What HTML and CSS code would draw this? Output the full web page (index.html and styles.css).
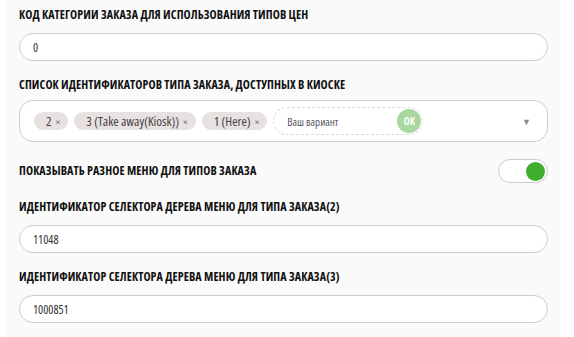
FILE: index.html
```html
<!DOCTYPE html>
<html lang="ru">
<head>
    <meta charset="UTF-8">
    <title>Настройки киоска</title>
    <link rel="stylesheet" href="styles.css">
</head>
<body>
    <div class="panel">
        <!-- Код категории -->
        <div class="field">
            <label class="label">КОД КАТЕГОРИИ ЗАКАЗА ДЛЯ ИСПОЛЬЗОВАНИЯ ТИПОВ ЦЕН</label>
            <input class="input" type="text" value="0">
        </div>

        <!-- Список типов заказа -->
        <div class="field">
            <label class="label label-multi">СПИСОК ИДЕНТИФИКАТОРОВ ТИПА ЗАКАЗА, ДОСТУПНЫХ В КИОСКЕ</label>
            <div class="multi">
                <span class="chip">2 <span class="chip-x">×</span></span>
                <span class="chip">3 (Take away(Kiosk)) <span class="chip-x">×</span></span>
                <span class="chip">1 (Here) <span class="chip-x">×</span></span>
                <div class="custom">
                    <span class="custom-text">Ваш вариант</span>
                    <span class="ok">OK</span>
                </div>
                <span class="arrow">▼</span>
            </div>
        </div>

        <!-- Переключатель -->
        <div class="toggle-row">
            <span class="label">ПОКАЗЫВАТЬ РАЗНОЕ МЕНЮ ДЛЯ ТИПОВ ЗАКАЗА</span>
            <span class="toggle"><span class="knob"></span></span>
        </div>

        <div class="field">
            <label class="label">ИДЕНТИФИКАТОР СЕЛЕКТОРА ДЕРЕВА МЕНЮ ДЛЯ ТИПА ЗАКАЗА(2)</label>
            <input class="input" type="text" value="11048">
        </div>

        <div class="field">
            <label class="label">ИДЕНТИФИКАТОР СЕЛЕКТОРА ДЕРЕВА МЕНЮ ДЛЯ ТИПА ЗАКАЗА(3)</label>
            <input class="input" type="text" value="1000851">
        </div>
    </div>
</body>
</html>
```

FILE: styles.css
```css
* {
    margin: 0;
    padding: 0;
    box-sizing: border-box;
}

body {
    background-color: #ffffff;
    font-family: 'Open Sans', sans-serif;
    font-stretch: 75%;
    padding-left: 7px;
    width: 560px;
    height: 100vh;
    overflow: hidden;
}

.panel {
    background-color: #fafafa;
    padding: 8px 12px 0 12px;
    height: 100vh;
}

.field {
    display: flex;
    flex-direction: column;
    margin-bottom: 17px;
}

.label {
    display: block;
    font-size: 12px;
    font-weight: 700;
    letter-spacing: 0.1px;
    color: #111111;
    line-height: 14px;
    height: 14px;
}

.field .label {
    margin-bottom: 11px;
}

.field .label-multi {
    margin-bottom: 8px;
}

.input {
    width: 100%;
    height: 28px;
    border: 1px solid #cccccc;
    border-radius: 14px;
    background-color: #ffffff;
    padding: 0 13px;
    font-family: 'Open Sans', sans-serif;
    font-stretch: 75%;
    font-size: 12px;
    color: #333333;
    outline: none;
}

.multi {
    display: flex;
    align-items: center;
    gap: 6px;
    height: 42px;
    border: 1px solid #cccccc;
    border-radius: 14px;
    background-color: #ffffff;
    padding: 0 14px;
}

.chip {
    display: flex;
    align-items: center;
    gap: 4px;
    height: 18px;
    padding: 0 8px 0 12px;
    background-color: #e8e1e1;
    border-radius: 9px;
    font-size: 13px;
    color: #444444;
}

.chip-x {
    font-size: 11px;
    color: #666666;
}

.custom {
    display: flex;
    align-items: center;
    justify-content: space-between;
    width: 150px;
    height: 28px;
    border: 1px dashed #e6d4d8;
    border-radius: 14px;
    padding: 0 0 0 13px;
}

.custom-text {
    font-size: 11px;
    color: #555566;
}

.ok {
    display: flex;
    align-items: center;
    justify-content: center;
    width: 24px;
    height: 24px;
    margin-right: 1px;
    border-radius: 50%;
    background-color: #a8d8a0;
    color: #ffffff;
    font-size: 10px;
    font-weight: 700;
}

.arrow {
    margin-left: auto;
    font-size: 9px;
    color: #888888;
    margin-right: 2px;
}

.toggle-row {
    display: flex;
    align-items: center;
    justify-content: space-between;
    margin-top: 1px;
    margin-bottom: 17px;
}

.toggle {
    display: flex;
    justify-content: flex-end;
    align-items: center;
    width: 50px;
    height: 24px;
    border: 1px solid #cccccc;
    border-radius: 12px;
    background-color: #ffffff;
    padding-right: 2px;
}

.knob {
    width: 19px;
    height: 19px;
    border-radius: 50%;
    background-color: #40ad2e;
}
```
